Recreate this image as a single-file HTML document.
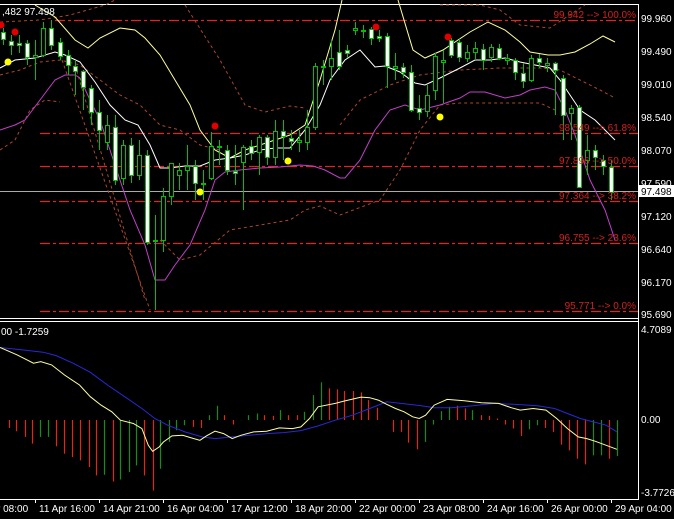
<!DOCTYPE html>
<html><head><meta charset="utf-8">
<style>
html,body{margin:0;padding:0;background:#000;}
svg{display:block;}
text{font-family:"Liberation Sans",sans-serif;font-size:10px;}
</style></head><body>
<svg id="s" width="674" height="519" viewBox="0 0 674 519" xmlns="http://www.w3.org/2000/svg">
<rect width="674" height="519" fill="#000"/>
<line x1="0" y1="4.5" x2="638" y2="4.5" stroke="#fff"/>
<line x1="638.5" y1="4" x2="638.5" y2="500" stroke="#fff"/>
<line x1="0" y1="318.5" x2="638" y2="318.5" stroke="#fff"/>
<line x1="0" y1="321.5" x2="638" y2="321.5" stroke="#fff"/>
<line x1="0" y1="499.5" x2="638" y2="499.5" stroke="#fff"/>
<line x1="0" y1="191.5" x2="638" y2="191.5" stroke="#aaa"/>
<g id="g"></g>
<text x="2" y="15" fill="#fff">,482 97.498</text>
<text x="1" y="335" fill="#fff">00 -1.7259</text>
<g fill="#fff">
<text x="641" y="22">99.960</text><text x="641" y="55">99.490</text><text x="641" y="88">99.010</text>
<text x="641" y="121">98.540</text><text x="641" y="154">98.070</text><text x="641" y="187">97.590</text>
<text x="641" y="220">97.120</text><text x="641" y="253">96.640</text><text x="641" y="286">96.170</text>
<text x="641" y="318">95.690</text>
<text x="641" y="333">4.7089</text><text x="641" y="423">0.00</text><text x="641" y="496">-3.7726</text>
</g>
<rect x="639" y="185" width="35" height="12" fill="#fff"/>
<text x="641" y="195" fill="#000">97.498</text>
<g fill="#fff">
<text x="-3" y="512">r 08:00</text><text x="39" y="512">11 Apr 16:00</text><text x="103" y="512">14 Apr 21:00</text>
<text x="167" y="512">16 Apr 04:00</text><text x="231" y="512">17 Apr 12:00</text><text x="295" y="512">18 Apr 20:00</text>
<text x="359" y="512">22 Apr 00:00</text><text x="423" y="512">23 Apr 08:00</text><text x="487" y="512">24 Apr 16:00</text>
<text x="551" y="512">26 Apr 00:00</text><text x="615" y="512">29 Apr 04:00</text>
</g>
</svg>
<script>
var g=document.getElementById('g'),NS='http://www.w3.org/2000/svg';
function el(t,a){var e=document.createElementNS(NS,t);for(var k in a)e.setAttribute(k,a[k]);g.appendChild(e);return e;}
function pl(p,c,d,w){el('polyline',{points:p.map(function(q){return q.join(',')}).join(' '),fill:'none',stroke:c,'stroke-width':w||1,'stroke-dasharray':d||''});}
var fib=[[20,'99.942 --> 100.0%',55],[133,'98.549 --> 61.8%',40],[166,'97.896 --> 50.0%',40],[201,'97.364 --> 38.2%',40],[243,'96.755 --> 23.6%',40],[311,'95.771 --> 0.0%',40]];
fib.forEach(function(f){el('line',{x1:f[2],y1:f[0]+.5,x2:638,y2:f[0]+.5,stroke:'#e02424','stroke-width':1.3,'stroke-dasharray':'10,3,3,3'});});
var br='#a8482a';
pl([[0,22],[40,20],[70,15],[105,5],[115,0]],br,'3,3');
pl([[0,75],[20,70],[40,62],[60,60],[80,65],[100,80],[120,95],[140,105],[160,125],[180,130],[200,145],[220,150]],br,'3,3');
pl([[0,150],[15,140],[30,110],[45,100],[60,102]],br,'3,3');
pl([[62,60],[150,310]],br,'3,3');
pl([[75,65],[145,300]],br,'3,3');
pl([[185,5],[220,60],[245,105],[265,112],[290,106],[305,108]],br,'3,3');
pl([[160,240],[180,260],[200,255],[230,230],[260,225],[290,220],[305,210],[320,206],[340,215],[380,200],[400,170],[420,130],[440,105],[460,103],[500,103],[540,103],[555,110]],br,'3,3');
pl([[340,125],[360,100],[390,85],[420,75],[460,70],[500,68],[540,68],[560,70],[580,80],[600,90],[615,98]],br,'3,3');
pl([[440,5],[480,5],[500,10],[520,25],[550,28],[565,18],[585,5]],br,'3,3');
var ly='#ffff9a';
pl([[35,5],[55,17],[75,40],[88,48],[100,38],[120,28],[135,30],[145,38],[160,55],[175,80],[190,105],[200,130],[215,150],[230,158],[245,150],[260,145],[275,140],[290,135],[305,125],[320,80],[335,30],[342,0]],ly);
pl([[398,0],[413,50],[425,58],[443,50],[470,32],[488,22],[505,30],[520,42],[530,52],[548,55],[560,55],[575,52],[590,44],[603,36],[615,42]],ly);
pl([[0,68],[15,60],[35,58],[55,52],[65,55],[80,62],[95,82],[110,105],[125,120],[138,125],[150,145],[160,168],[170,168],[185,166],[200,166],[215,160],[230,158],[245,155],[260,150],[275,148],[290,148],[305,130],[320,105],[330,80],[345,60],[360,50],[375,67],[385,66],[400,72],[415,83],[425,85],[440,78],[460,68],[475,60],[490,60],[505,58],[520,62],[535,65],[550,68],[560,80],[570,95],[580,110],[595,120],[605,130],[615,140]],'#fff');
pl([[0,130],[15,125],[25,120],[40,100],[55,80],[65,75],[75,75],[80,78],[90,100],[100,120],[110,150],[120,180],[130,210],[145,245],[155,280],[165,280],[175,265],[190,245],[205,210],[215,180],[225,172],[240,170],[260,168],[280,167],[300,165],[313,166],[325,170],[340,178],[345,178],[360,160],[375,130],[390,110],[405,105],[420,110],[440,105],[460,98],[470,92],[485,92],[505,98],[520,95],[530,90],[545,87],[555,90],[565,110],[575,135],[590,180],[605,210],[615,240]],'#c040c8');
var C=[[0,32,39,28,45,'w'],[8,41,45,35,55,'w'],[16,43,45,35,53,'w'],[24,43,57,40,65,'w'],[32,55,57,40,80,'h'],[40,28,55,22,57,'h'],[48,28,45,20,50,'w'],[57,42,56,38,60,'w'],[65,55,65,50,75,'w'],[72,66,71,60,95,'w'],[80,71,87,70,110,'w'],[88,88,112,85,125,'w'],[96,112,130,100,150,'w'],[104,125,142,115,150,'h'],[112,127,180,115,185,'w'],[120,145,178,140,185,'h'],[128,145,175,138,183,'w'],[136,155,175,140,180,'h'],[144,155,242,150,245,'w'],[152,240,241,215,310,'h'],[160,196,240,188,252,'h'],[168,163,196,163,205,'h'],[176,170,175,163,190,'h'],[184,166,170,145,190,'h'],[192,166,183,160,200,'w'],[200,183,184,170,200,'h'],[208,146,178,132,180,'h'],[216,146,147,140,165,'h'],[224,150,170,145,175,'w'],[232,171,173,145,185,'w'],[240,147,162,145,210,'h'],[248,146,153,140,160,'w'],[256,137,152,135,175,'h'],[264,137,157,135,165,'w'],[272,131,157,120,165,'h'],[280,131,136,120,160,'w'],[288,138,141,130,150,'w'],[296,140,142,130,152,'h'],[304,127,142,110,150,'h'],[312,66,127,63,130,'h'],[320,66,67,60,85,'h'],[328,58,66,40,80,'h'],[336,52,66,30,70,'w'],[344,50,53,45,58,'w'],[352,28,30,22,35,'h'],[360,30,31,25,38,'h'],[368,29,38,27,45,'w'],[376,36,38,30,42,'w'],[384,36,66,33,88,'w'],[392,66,68,53,80,'h'],[400,67,72,63,78,'w'],[408,72,110,65,112,'w'],[416,108,112,95,120,'w'],[424,95,111,85,117,'h'],[432,56,90,53,100,'h'],[440,60,62,50,103,'h'],[448,40,55,38,58,'w'],[456,42,57,38,62,'w'],[464,52,58,45,62,'h'],[472,48,52,42,60,'h'],[480,49,60,44,70,'w'],[488,47,57,44,62,'h'],[496,48,58,44,60,'w'],[504,58,60,54,65,'h'],[512,60,72,58,80,'w'],[520,73,81,63,88,'w'],[528,58,80,55,82,'h'],[536,58,62,54,68,'w'],[544,63,65,58,72,'h'],[552,63,70,62,115,'w'],[560,78,115,75,140,'w'],[568,108,113,105,140,'h'],[576,107,187,105,187,'w'],[584,150,160,135,175,'h'],[592,150,157,145,170,'w'],[600,160,166,155,175,'w'],[608,167,192,160,200,'w']];
C.forEach(function(c){var x=c[0]+3.5;el('line',{x1:x,y1:c[3],x2:x,y2:c[4],stroke:'#00c000'});
 el('rect',{x:c[0]+1.5,y:c[1]+.5,width:4,height:Math.max(1,c[2]-c[1]),fill:c[5]=='w'?'#fff':'#000',stroke:'#00c000'});});
[[1,25],[15,32],[215,126],[376,27],[448,37]].forEach(function(d){el('circle',{cx:d[0],cy:d[1],r:3.5,fill:'#e00000'});});
[[8,62],[200,192],[288,161],[440,117]].forEach(function(d){el('circle',{cx:d[0],cy:d[1],r:3.5,fill:'#ffff00'});});
fib.forEach(function(f){var t=el('text',{x:636,y:f[0]-2,fill:'#d42020','text-anchor':'end'});t.textContent=f[1];});
function X(z){return z/2.326;}function Y(z){return 318+z/2.985;}
var H=[[20,328,'r'],[38,338,'r'],[57,355,'r'],[75,375,'r'],[94,355,'g'],[112,355,'g'],[131,383,'r'],[150,405,'r'],[168,415,'r'],[187,425,'r'],[206,445,'r'],[224,470,'r'],[243,468,'g'],[262,488,'r'],[280,482,'g'],[299,460,'g'],[317,440,'g'],[336,470,'r'],[355,515,'r'],[373,450,'g'],[392,370,'g'],[410,335,'g'],[429,320,'g'],[448,325,'r'],[467,328,'r'],[485,290,'g'],[504,262,'g'],[522,290,'r'],[541,318,'r'],[560,305,'g'],[578,290,'g'],[597,285,'g'],[615,290,'r'],[634,292,'r'],[652,275,'g'],[671,290,'r'],[690,290,'r'],[708,280,'g'],[727,230,'g'],[746,192,'g'],[765,210,'r'],[783,213,'r'],[801,218,'r'],[820,218,'r'],[839,222,'r'],[857,245,'r'],[876,268,'r'],[913,340,'r'],[932,340,'r'],[950,372,'r'],[969,392,'r'],[988,370,'g'],[1006,318,'g'],[1025,278,'g'],[1044,265,'g'],[1062,262,'r'],[1081,270,'r'],[1099,275,'g'],[1118,290,'r'],[1137,292,'r'],[1155,300,'r'],[1174,318,'r'],[1193,330,'r'],[1211,352,'r'],[1230,332,'g'],[1249,320,'g'],[1267,328,'r'],[1286,340,'r'],[1305,378,'r'],[1323,395,'r'],[1342,420,'r'],[1361,437,'r'],[1379,410,'g'],[1398,410,'g'],[1416,420,'r']];
H.forEach(function(h){var x=Math.round(X(h[0]))+.5;el('line',{x1:x,y1:420,x2:x,y2:Y(h[1]),stroke:h[2]=='r'?'#e02a10':'#1a8a1a','stroke-width':1.2});});
el('line',{x1:617.5,y1:Y(305),x2:617.5,y2:Y(412),stroke:'#1a8a1a','stroke-width':1.2});
function mp(a,c){pl(a.map(function(p){return [X(p[0]).toFixed(1),Y(p[1]).toFixed(1)]}),c);}
mp([[0,88],[50,95],[100,102],[130,112],[170,135],[210,162],[250,200],[290,235],[330,270],[360,300],[390,320],[430,340],[470,355],[500,360],[540,355],[580,350],[620,345],[660,342],[700,336],[740,322],[780,305],[820,290],[860,270],[900,250],[940,256],[980,262],[1010,268],[1050,268],[1100,262],[1150,255],[1200,258],[1250,262],[1290,270],[1320,285],[1350,300],[1380,310],[1410,320],[1435,340]],'#2828d8');
mp([[0,88],[40,110],[78,135],[95,130],[120,140],[150,170],[185,200],[210,235],[235,260],[260,280],[280,305],[310,315],[330,330],[345,380],[355,398],[370,385],[380,370],[400,352],[425,350],[445,358],[465,365],[480,352],[500,338],[520,345],[540,360],[560,350],[590,340],[620,338],[650,328],[680,330],[700,325],[720,300],[740,265],[780,255],[800,248],[820,242],[840,236],[860,238],[880,245],[900,258],[920,270],[940,280],[960,295],[975,300],[990,290],[1010,260],[1040,243],[1080,247],[1120,253],[1160,255],[1190,268],[1210,275],[1240,270],[1270,275],[1295,300],[1320,330],[1345,355],[1365,360],[1385,368],[1410,380],[1435,392]],'#ffffa0');
[35,99,163,227,291,355,419,483,547,611].forEach(function(x){el('line',{x1:x+.5,y1:499,x2:x+.5,y2:503,stroke:'#fff'});});
</script>
</body></html>
